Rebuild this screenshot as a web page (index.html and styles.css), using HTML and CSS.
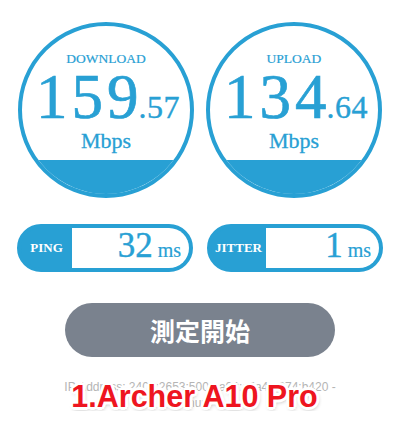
FILE: index.html
```html
<!DOCTYPE html>
<html lang="ja">
<head>
    <meta charset="UTF-8">
    <meta name="viewport" content="width=device-width, initial-scale=1.0">
    <title>Speed Test</title>
    <link rel="stylesheet" href="styles.css">
</head>
<body>

    <div class="gauges">
        <div class="gauge">
            <div class="gauge-label">DOWNLOAD</div>
            <div class="gauge-value">159<span class="decimal">.57</span></div>
            <div class="gauge-unit">Mbps</div>
            <div class="gauge-fill"></div>
        </div>
        <div class="gauge">
            <div class="gauge-label">UPLOAD</div>
            <div class="gauge-value">134<span class="decimal">.64</span></div>
            <div class="gauge-unit">Mbps</div>
            <div class="gauge-fill"></div>
        </div>
    </div>

    <div class="pills">
        <div class="pill">
            <div class="pill-label">PING</div>
            <div class="pill-value"><span class="num">32</span><span class="unit">ms</span></div>
        </div>
        <div class="pill">
            <div class="pill-label">JITTER</div>
            <div class="pill-value"><span class="num">1</span><span class="unit">ms</span></div>
        </div>
    </div>

    <div class="actions">
        <button class="start-btn">測定開始</button>
    </div>

    <div class="info">
        <p class="ip">IP Address: 2400:2653:5001:a00:c5a4:6674:b420 -</p>
        <p class="ip">nuro</p>
        <div class="caption">1.Archer A10 Pro</div>
    </div>

</body>
</html>
```

FILE: styles.css
```css
/* General */
body {
    margin: 0;
    padding: 0;
    background: #ffffff;
    font-family: 'Liberation Serif', serif;
    color: #28a0d4;
}

/* Download / Upload circles */
.gauges {
    display: flex;
    justify-content: center;
    gap: 12px;
    padding-top: 22px;
}

.gauge {
    width: 176px;
    height: 176px;
    box-sizing: border-box;
    border: 4px solid #28a0d4;
    border-radius: 50%;
    overflow: hidden;
    display: flex;
    flex-direction: column;
    align-items: center;
    text-align: center;
}

.gauge-label {
    margin-top: 26px;
    font-size: 13.5px;
    line-height: 14px;
    -webkit-text-stroke: 0.2px currentColor;
}

.gauge-value {
    margin-top: 5px;
    padding-left: 4px;
    font-size: 63px;
    line-height: 52px;
    letter-spacing: 4px;
    white-space: nowrap;
    -webkit-text-stroke: 0.7px currentColor;
}

.gauge-value .decimal {
    margin-left: -4px;
    font-size: 32px;
    line-height: 1;
    letter-spacing: 0.5px;
    -webkit-text-stroke: 0.4px currentColor;
}

.gauge-unit {
    margin-top: 6px;
    font-size: 22px;
    line-height: 24px;
    -webkit-text-stroke: 0.3px currentColor;
}

.gauge-fill {
    margin-top: auto;
    align-self: stretch;
    height: 34px;
    background: #28a0d4;
}

/* Ping / Jitter */
.pills {
    display: flex;
    justify-content: center;
    gap: 14px;
    margin-top: 26px;
}

.pill {
    width: 176px;
    height: 48px;
    box-sizing: border-box;
    border: 4px solid #28a0d4;
    border-radius: 24px;
    background: #28a0d4;
    display: flex;
}

.pill-label {
    min-width: 43px;
    padding: 0 4px;
    display: flex;
    align-items: center;
    justify-content: center;
    color: #ffffff;
    font-size: 13px;
    font-weight: bold;
}

.pill-value {
    flex: 1;
    background: #ffffff;
    border-radius: 0 20px 20px 0;
    display: flex;
    justify-content: flex-end;
    align-items: baseline;
    padding-right: 8px;
    line-height: 36px;
}

.pill-value .num {
    font-size: 35px;
    -webkit-text-stroke: 0.4px currentColor;
}

.pill-value .unit {
    font-size: 20px;
    margin-left: 5px;
    -webkit-text-stroke: 0.2px currentColor;
}

/* Start button */
.actions {
    display: flex;
    justify-content: center;
    margin-top: 31px;
}

.start-btn {
    width: 270px;
    height: 54px;
    border: none;
    border-radius: 27px;
    background: #7a828e;
    color: #ffffff;
    font-family: 'Noto Sans CJK JP', sans-serif;
    font-size: 25px;
    font-weight: bold;
    cursor: pointer;
}

/* IP info + caption */
.info {
    position: relative;
    margin-top: 22px;
    text-align: center;
}

.ip {
    margin: 0;
    font-family: 'Liberation Sans', sans-serif;
    font-size: 12px;
    line-height: 16px;
    color: #b5b5b5;
}

.caption {
    position: absolute;
    left: 0;
    right: 11px;
    top: 0;
    font-family: 'Liberation Sans', sans-serif;
    font-size: 30.5px;
    font-weight: bold;
    line-height: 34px;
    color: #ee1520;
    text-shadow:
        2px 0 0 #fff, -2px 0 0 #fff, 0 2px 0 #fff, 0 -2px 0 #fff,
        2px 2px 0 #fff, -2px -2px 0 #fff, 2px -2px 0 #fff, -2px 2px 0 #fff,
        3px 0 0 #fff, -3px 0 0 #fff, 0 3px 0 #fff, 0 -3px 0 #fff,
        1px 2px 4px rgba(0, 0, 0, 0.45);
}
```
